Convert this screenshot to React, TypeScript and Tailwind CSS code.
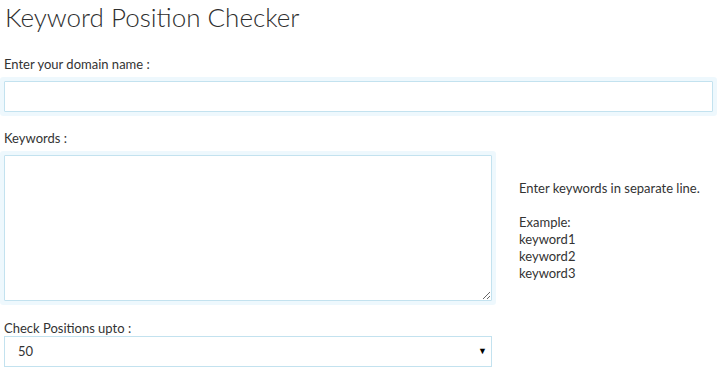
import { ChangeEvent, useState } from "react";

const fieldBox =
  "block border border-[#c3e2ef] bg-white text-[13px] text-[#333] outline-none shadow-[0_0_0_4px_#eef8fd] rounded-[1px]";

export default function App() {
  const [domain, setDomain] = useState("");
  const [keywords, setKeywords] = useState("");
  const [limit, setLimit] = useState("50");

  return (
    <div className="h-[370px] w-[717px] overflow-hidden bg-white text-[#333]" style={{ fontFamily: "Lato, 'Noto Sans', sans-serif" }}>
      <h1 className="pl-[5px] pt-[1px] text-[26px] font-light leading-[32px] text-[#2f2f2f]">Keyword Position Checker</h1>

      <div className="px-[4px]">
        <label className="mt-[22px] block text-[13px] leading-[18px]">Enter your domain name :</label>
        <input
          value={domain}
          onChange={(e: ChangeEvent<HTMLInputElement>) => setDomain(e.target.value)}
          className={`${fieldBox} mt-[8px] h-[31px] w-full px-2`}
        />

        <label className="mt-[17px] block text-[13px] leading-[18px]">Keywords :</label>
        <div className="mt-[8px] flex items-start">
          <textarea
            value={keywords}
            onChange={(e: ChangeEvent<HTMLTextAreaElement>) => setKeywords(e.target.value)}
            className={`${fieldBox} h-[146px] w-[488px] shrink-0 p-2`}
          />
          <div className="ml-[27px] mt-[25px] text-[13px] leading-[17px]">
            <p>Enter keywords in separate line.</p>
            <p className="mt-[17px]">Example:</p>
            <p>keyword1</p>
            <p>keyword2</p>
            <p>keyword3</p>
          </div>
        </div>

        <label className="mt-[19px] block text-[13px] leading-[16px]">Check Positions upto :</label>
        <div className="relative w-[488px]">
          <select
            value={limit}
            onChange={(e: ChangeEvent<HTMLSelectElement>) => setLimit(e.target.value)}
            className="block h-[31px] w-full appearance-none border border-[#c3e2ef] bg-white pl-[13px] text-[13px] text-[#333] outline-none"
          >
            <option value="10">10</option>
            <option value="20">20</option>
            <option value="50">50</option>
            <option value="100">100</option>
          </select>
          <span className="pointer-events-none absolute right-[5px] top-[10px] text-[9px] leading-none text-black">▼</span>
        </div>
      </div>
    </div>
  );
}
